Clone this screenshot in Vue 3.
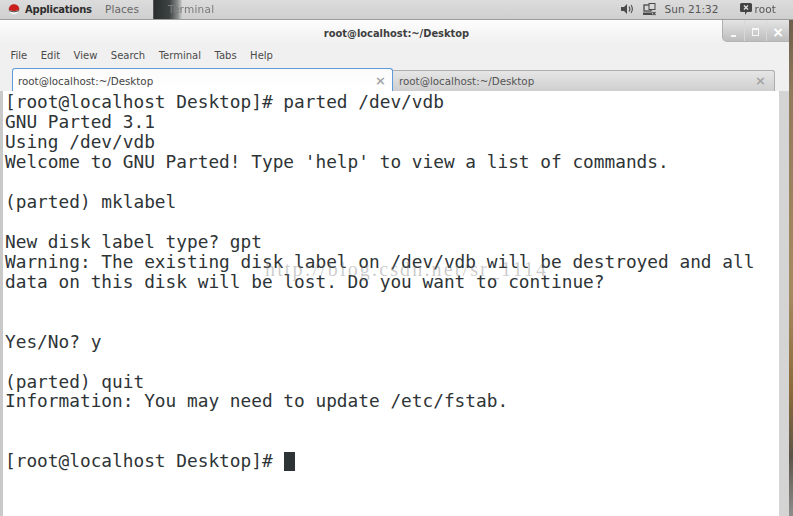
<template>
  <div class="screen">
    <header class="panel">
      <div class="panel-left">
        <svg class="hat" width="12" height="11" viewBox="0 0 12 11">
          <circle cx="6" cy="5.500" r="5.300" fill="#f4f4f4" stroke="#bbb" stroke-width=".4" />
          <path d="M.7 5.500C1 2 3.500.3 6 .3 9 .3 11.300 2.500 11.300 5.500 8.500 7.500 3.500 7.500.7 5.500Z" fill="#c8201d" />
          <path d="M1 6.500C3.500 8.200 8.500 8.200 11 6.500" fill="none" stroke="#222" stroke-width=".8" />
        </svg>
        <span class="apps">Applications</span>
        <span class="places">Places</span>
        <span class="task">
          <span class="task-thumb"></span>
          <span class="task-label">Terminal</span>
        </span>
      </div>
      <div class="panel-right">
        <svg width="13" height="12" viewBox="0 0 13 12">
          <path d="M0 4h3l3-3v10L3 8H0z" fill="#4a4a4a" />
          <path d="M8 3.500c1 1.400 1 3.600 0 5M10 2c1.800 2.200 1.800 5.800 0 8" fill="none" stroke="#4a4a4a" stroke-width="1.100" />
        </svg>
        <svg class="net" width="13" height="13" viewBox="0 0 13 13">
          <rect x="1" y="2" width="7" height="6" fill="none" stroke="#4a4a4a" stroke-width="1.300" />
          <rect x="0" y="9.500" width="9" height="2.500" fill="#4a4a4a" />
          <rect x="6" y="0.500" width="6" height="6" fill="#d8d8d8" stroke="#4a4a4a" />
          <path d="M9.500 9l3 3M12.500 9l-3 3" stroke="#4a4a4a" stroke-width="1.100" />
        </svg>
        <span class="clock">Sun 21:32</span>
        <span class="user">
          <svg width="12" height="12" viewBox="0 0 12 12">
            <path d="M1.500 0h9A1.500 1.500 0 0 1 12 1.500v6A1.500 1.500 0 0 1 10.500 9H7l-2 3V9H1.500A1.500 1.500 0 0 1 0 7.500v-6A1.500 1.500 0 0 1 1.500 0z" fill="#444" />
            <path d="M4 2.500l4 4M8 2.500l-4 4" stroke="#e4e4e4" stroke-width="1.200" />
          </svg>
          <span>root</span>
        </span>
      </div>
    </header>

    <div class="desk">
      <main class="window">
        <div class="titlebar">root@localhost:~/Desktop</div>
        <div class="controls">
          <span class="ctl"><i class="min"></i></span>
          <span class="ctl"><i class="max"></i></span>
          <span class="ctl x">×</span>
        </div>
        <nav class="menubar">
          <span v-for="m in menus" :key="m">{{ m }}</span>
        </nav>
        <div class="tabs">
          <div class="tab active"><span>root@localhost:~/Desktop</span><b>×</b></div>
          <div class="tab"><span>root@localhost:~/Desktop</span><b>×</b></div>
        </div>
        <div class="body">
          <div class="gutter"></div>
          <div class="term">
            <pre class="text">{{ output }}<span class="cursor"></span></pre>
            <div class="mark">http://blog.csdn.net/sr_1114</div>
          </div>
          <div class="scroll"></div>
        </div>
      </main>
      <div class="wall"></div>
    </div>
  </div>
</template>

<script setup>
const menus = ['File', 'Edit', 'View', 'Search', 'Terminal', 'Tabs', 'Help']
const output = `[root@localhost Desktop]# parted /dev/vdb
GNU Parted 3.1
Using /dev/vdb
Welcome to GNU Parted! Type 'help' to view a list of commands.

(parted) mklabel

New disk label type? gpt
Warning: The existing disk label on /dev/vdb will be destroyed and all
data on this disk will be lost. Do you want to continue?


Yes/No? y

(parted) quit
Information: You may need to update /etc/fstab.


[root@localhost Desktop]# `
</script>

<style>
html, body { margin: 0; padding: 0; background: #fff; overflow: hidden; }
</style>

<style scoped>
.screen {
  width: 793px;
  height: 516px;
  display: flex;
  flex-direction: column;
  overflow: hidden;
  font-family: "DejaVu Sans", sans-serif;
  color: #3a3a3a;
  filter: blur(.35px);
}
.panel {
  height: 20px;
  box-sizing: border-box;
  flex: none;
  display: flex;
  justify-content: space-between;
  align-items: center;
  background: linear-gradient(#dcdcdc, #cfcfcf);
  border-bottom: 1px solid #9c9c9c;
  font-size: 10.500px;
  padding: 0 17px 1px 8px;
}
.panel-left, .panel-right { display: flex; align-items: center; }
.hat { margin-right: 5px; }
.apps { font-weight: 700; font-size: 10px; letter-spacing: -.25px; color: #2e2e2e; width: 67px; white-space: nowrap; }
.places { margin-left: 13px; width: 35px; color: #666; letter-spacing: .1px; }
.task { position: relative; margin-left: 13px; width: 70px; height: 19px; display: flex; align-items: center; }
.task-thumb {
  width: 28px; height: 19px;
  background: linear-gradient(90deg, #2a2e2e 0%, #3c4241 55%, #8a8f8d 85%, #cdcdcd 100%);
  border-left: 1px solid #555;
}
.task-label { position: absolute; left: 15px; color: #7a7a7a; letter-spacing: .25px; }
.panel-right { color: #555; }
.net { margin-left: 9px; }
.clock { margin-left: 9px; letter-spacing: .05px; width: 56px; white-space: nowrap; }
.user { display: flex; align-items: center; gap: 3px; margin-left: 19px; letter-spacing: .1px; }
.desk { flex: 1; display: flex; min-height: 0; }
.window {
  position: relative;
  flex: 1;
  display: flex;
  flex-direction: column;
  min-width: 0;
  background: linear-gradient(#fdfdfd 0, #f0f0f0 24px, #ececec 100%);
}
.titlebar {
  height: 26px;
  flex: none;
  display: flex;
  align-items: center;
  justify-content: center;
  font-size: 9.900px;
  font-weight: 700;
  color: #3f3f3f;
  padding-left: 4px;
  box-sizing: border-box;
}
.controls {
  position: absolute;
  right: 0; top: 0;
  height: 21px;
  display: flex;
  background: linear-gradient(#e4e4e4, #bdbdbd);
  border-left: 1px solid #b0b0b0;
  border-bottom: 1px solid #b4b4b4;
  border-bottom-left-radius: 5px;
}
.ctl {
  width: 22px;
  display: flex;
  align-items: flex-end;
  justify-content: center;
  padding-bottom: 4px;
  box-sizing: border-box;
  border-right: 1px solid #d8d8d8;
  color: #fff;
}
.ctl:last-child { border-right: 0; }
.ctl.x { font-size: 14px; line-height: 12px; font-weight: 700; padding-bottom: 3px; }
.min { width: 5px; height: 2px; background: #f6f6f6; display: block; }
.max { width: 5px; height: 5px; border: 1px solid #f6f6f6; border-top-width: 2px; display: block; margin-bottom: 1px; }
.menubar {
  height: 22px;
  flex: none;
  display: flex;
  align-items: center;
  gap: 13.500px;
  padding: 0 0 4px 10.500px;
  box-sizing: border-box;
  font-size: 10px;
  color: #4a4a4a;
}
.tabs {
  height: 23px;
  flex: none;
  display: flex;
  align-items: flex-end;
  padding-left: 12px;
  box-sizing: border-box;
  font-size: 10.300px;
  color: #555;
}
.tab {
  width: 382px;
  height: 21px;
  display: flex;
  align-items: center;
  justify-content: space-between;
  padding: 0 8px 0 6px;
  box-sizing: border-box;
  background: linear-gradient(#e6e6e6, #cfcfcf);
  border-top: 1px solid #aeaeae;
  border-right: 1px solid #aeaeae;
  border-top-right-radius: 3px;
}
.tab.active {
  width: 381px;
  height: 23px;
  padding: 2px 6px 0 5px;
  background: linear-gradient(#fbfbfb, #fff);
  border-top: 1px solid #5d9bdc;
  border-left: 1px solid #5d9bdc;
  border-right: 1px solid #5d9bdc;
  border-top-left-radius: 3px;
  border-top-right-radius: 3px;
  color: #444;
}
.tab b { font-weight: 700; font-size: 13px; line-height: 12px; color: #a4a4a4; }
.body { flex: 1; display: flex; min-height: 0; }
.gutter { width: 3px; flex: none; background: #c9c9c9; }
.term { position: relative; flex: 1; background: #fff; min-width: 0; overflow: hidden; }
.text {
  margin: 0;
  padding: 1.200px 0 0 2px;
  font-family: "DejaVu Sans Mono", monospace;
  font-size: 17.800px;
  line-height: 19.950px;
  color: #2e3436;
  white-space: pre;
}
.cursor {
  display: inline-block;
  width: 11px;
  height: 19px;
  margin-left: 1px;
  background: #2e3436;
  vertical-align: -4px;
}
.mark {
  position: absolute;
  left: 262px;
  top: 167px;
  font-family: "Liberation Serif", serif;
  font-size: 20px;
  letter-spacing: 2.150px;
  color: rgba(120, 120, 120, .38);
  white-space: nowrap;
}
.scroll { width: 10px; flex: none; background: #d4d4d4; }
.wall {
  width: 4px;
  flex: none;
  background: linear-gradient(#6b5e4c 0, #8f7a5c 15%, #a58a60 55%, #8a6a3a 75%, #5b5448 88%, #8e8e8e 100%);
}
</style>
